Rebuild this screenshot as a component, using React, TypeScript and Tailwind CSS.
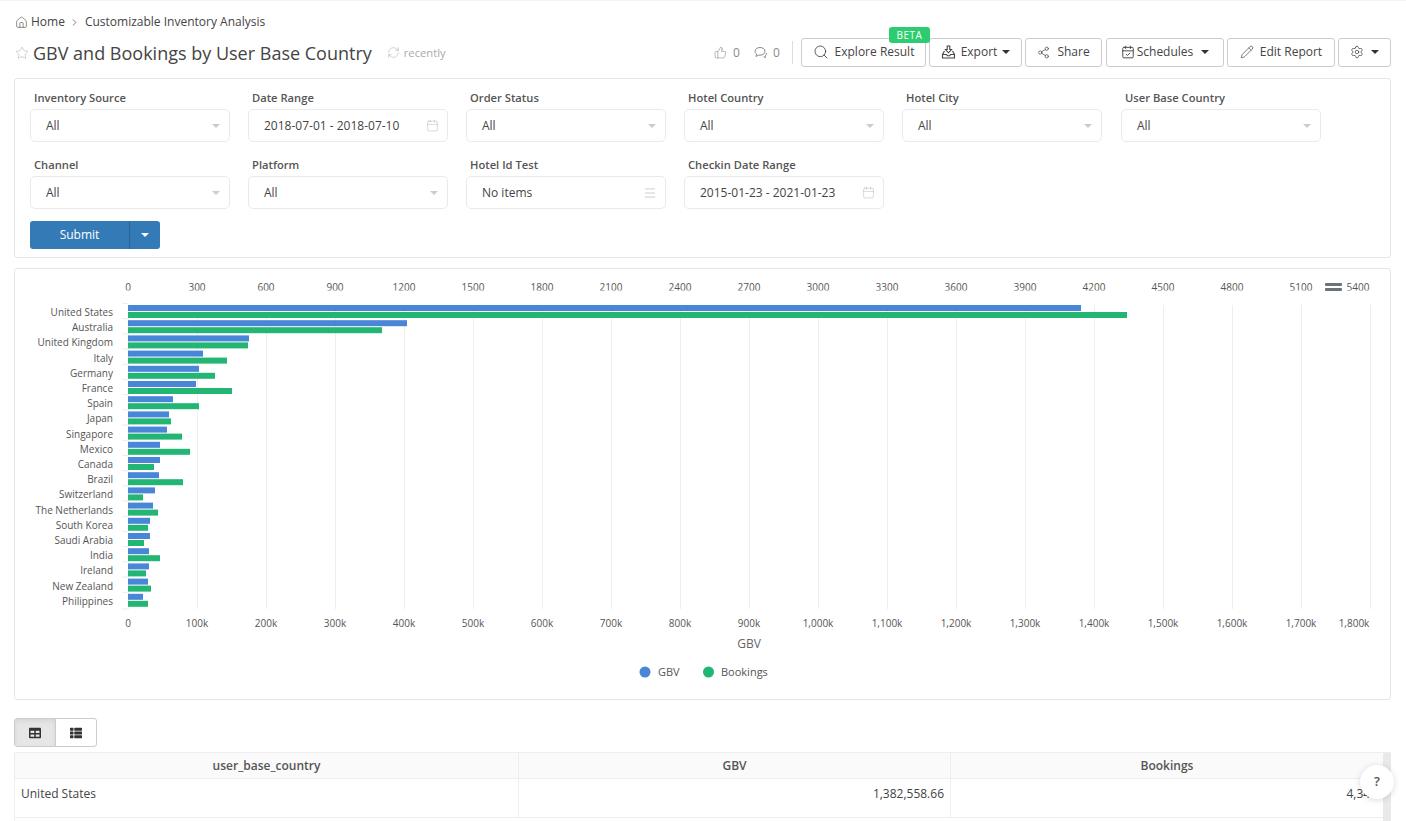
import { Calendar, CalendarCheck, ChevronRight, Home, Menu, Pencil, RefreshCw, Search, Settings, Share2, Star, ThumbsUp } from "lucide-react";
import { FaTable, FaThList } from "react-icons/fa";

const bars: [string, number, number][] = [
  ["United States", 1081, 1127],
  ["Australia", 407, 382],
  ["United Kingdom", 249, 248],
  ["Italy", 203, 227],
  ["Germany", 199, 215],
  ["France", 196, 232],
  ["Spain", 173, 199],
  ["Japan", 169, 171],
  ["Singapore", 167, 182],
  ["Mexico", 160, 190],
  ["Canada", 160, 154],
  ["Brazil", 159, 183],
  ["Switzerland", 155, 143],
  ["The Netherlands", 153, 158],
  ["South Korea", 150, 148],
  ["Saudi Arabia", 150, 144],
  ["India", 149, 160],
  ["Ireland", 149, 146],
  ["New Zealand", 148, 151],
  ["Philippines", 143, 148],
];

const topTicks = ["0", "300", "600", "900", "1200", "1500", "1800", "2100", "2400", "2700", "3000", "3300", "3600", "3900", "4200", "4500", "4800", "5100", "5400"];
const bottomTicks = ["0", "100k", "200k", "300k", "400k", "500k", "600k", "700k", "800k", "900k", "1,000k", "1,100k", "1,200k", "1,300k", "1,400k", "1,500k", "1,600k", "1,700k", "1,800k"];

const Caret = () => <span className="inline-block w-0 h-0 border-x-[4px] border-x-transparent border-t-[4px] border-t-[#333]" />;

const ActionButton = ({ className, children }: { className: string; children: React.ReactNode }) => (
  <button className={`h-[29px] pb-[1px] flex items-center justify-center border border-[#ccc] rounded-[3px] bg-white text-[12px] text-[#444] ${className}`}>
    {children}
  </button>
);

const Field = ({ label, value, icon, className }: { label: string; value: string; icon?: React.ReactNode; className?: string }) => (
  <div className={`w-[200px] ${className ?? ""}`}>
    <div className="pl-1 h-[20px] text-[11.2px] font-semibold leading-[20px] text-[#555]">{label}</div>
    <div className="mt-[1px] h-[33px] pl-[15px] pr-[8px] flex items-center justify-between border border-[#eaeaea] rounded-[5px] text-[12px] text-[#444]">
      <span>{value}</span>
      {icon ?? <span className="mr-[1px] w-0 h-0 border-x-[4px] border-x-transparent border-t-[4px] border-t-[#ccc]" />}
    </div>
  </div>
);

const Chart = () => (
  <svg width="1375" height="430" viewBox="15 269 1375 430" className="block" fontFamily="'Open Sans', sans-serif">
    <defs>
      <clipPath id="topClip">
        <rect x="15" y="270" width="1375" height="20.5" />
      </clipPath>
    </defs>
    {topTicks.map((_, i) => (
      <line key={i} x1={128.5 + i * 69} x2={128.5 + i * 69} y1="305" y2="609" stroke="#eeeeee" />
    ))}
    <g clipPath="url(#topClip)" fontSize="10" fill="#555" textAnchor="middle">
      {topTicks.map((t, i) => (
        <text key={t} x={128 + i * 69 - (i === 18 ? 12 : 0)} y="291">{t}</text>
      ))}
    </g>
    {bars.map(([name, blue, green], i) => {
      const y = 305 + i * 15.2;
      return (
        <g key={name}>
          <line x1="122" x2="128" y1={y - 1.5} y2={y - 1.5} stroke="#eeeeee" />
          <text x="113" y={y + 11} fontSize="10" fill="#555" textAnchor="end">{name}</text>
          <rect x="128" y={y} width={blue - 128} height="6" fill="#4a86d8" />
          <rect x="128" y={y + 7} width={green - 128} height="6" fill="#22b573" />
        </g>
      );
    })}
    <line x1="122" x2="128" y1="609" y2="609" stroke="#eeeeee" />
    <g fontSize="10" fill="#555" textAnchor="middle">
      {bottomTicks.map((t, i) => (
        <text key={t} x={128 + i * 69 - (i === 18 ? 16 : 0)} y="627">{t}</text>
      ))}
    </g>
    <text x="749" y="648" fontSize="12" fill="#666" textAnchor="middle">GBV</text>
    <circle cx="645" cy="672" r="5.5" fill="#4a86d8" />
    <text x="658" y="676" fontSize="11" fill="#555">GBV</text>
    <circle cx="708.5" cy="672" r="5.5" fill="#22b573" />
    <text x="721" y="676" fontSize="11" fill="#555">Bookings</text>
    <rect x="1325" y="283" width="17" height="3" rx="1" fill="#6b7378" />
    <rect x="1325" y="288" width="17" height="3" rx="1" fill="#6b7378" />
  </svg>
);

export default function App() {
  return (
    <div className="relative h-[821px] overflow-hidden bg-white pl-[14px] pr-[15px] font-['Open_Sans',sans-serif] text-[#444]">
      <div className="absolute inset-x-0 top-0 h-[1px] bg-[#f3f3f3]" />

      <div className="pt-[8px] h-[36px] flex items-center text-[12px] text-[#444]">
        <Home size={13} strokeWidth={1.2} className="ml-[1px] mr-[3px] text-[#555]" />
        <span>Home</span>
        <ChevronRight size={11} className="mx-[4px] text-[#777]" />
        <span className="ml-[1px]">Customizable Inventory Analysis</span>
      </div>

      <div className="relative mt-[2px] h-[29px] flex items-center justify-between">
        <div className="flex items-center">
          <Star size={14} strokeWidth={1.2} className="ml-[1px] text-[#bbb]" />
          <span className="ml-[4px] mt-[1px] text-[18px] leading-[29px] text-[#444]">GBV and Bookings by User Base Country</span>
          <RefreshCw size={13} strokeWidth={1.2} className="ml-[15px] text-[#bbb]" />
          <span className="ml-[4px] mt-[1px] text-[11.2px] text-[#aaa]">recently</span>
        </div>
        <div className="flex items-center">
          <ThumbsUp size={13} strokeWidth={1.1} className="text-[#888]" />
          <span className="ml-[6px] w-[11px] text-[12px] text-[#888]">0</span>
          <svg width="13" height="13" viewBox="0 0 13 13" fill="none" stroke="#888" strokeWidth="1" className="ml-[10px]">
            <path d="M6 1.5c-2.8 0-5 1.7-5 3.8 0 1.1.6 2.1 1.6 2.8L2 10.5l2.6-1.4c.4.1.9.1 1.4.1 2.8 0 5-1.7 5-3.9S8.800 1.500 6 1.500Z" />
            <path d="M12.500 7c0 1.300-.6 2.300-1.500 3l.5 1.500-2-.8" />
          </svg>
          <span className="ml-[6px] w-[12px] text-[12px] text-[#888]">0</span>
          <div className="ml-[7px] mr-[8px] h-[23px] w-[1px] bg-[#ddd]" />
          <div className="flex gap-[3px]">
            <ActionButton className="relative w-[125px] gap-[6px]">
              <Search size={16} strokeWidth={1.3} />
              Explore Result
              <span className="absolute right-[-5px] top-[-12px] h-[16px] w-[41px] rounded-[3px] bg-[#2ecc71] text-center text-[10px] leading-[17px] tracking-[0.5px] text-white">BETA</span>
            </ActionButton>
            <ActionButton className="w-[93px] gap-[5px]">
              <svg width="15" height="14" viewBox="0 0 15 14" fill="none" stroke="#444" strokeWidth="1.1">
                <path d="M6.200 1h2.600v3.500h1.700L7.500 7.800 4.500 4.500h1.700V1ZM3.500 6 1.500 9.500V13h12V9.500L11.500 6M1.500 9.500h4l.8 1.300h2.400l.8-1.300h4" />
              </svg>
              <span>Export</span>
              <Caret />
            </ActionButton>
            <ActionButton className="w-[77px] gap-[7px]">
              <Share2 size={13} strokeWidth={1.3} />
              Share
            </ActionButton>
            <ActionButton className="ml-[1px] w-[118px] gap-[2px]">
              <CalendarCheck size={14} strokeWidth={1.6} />
              Schedules
              <span className="ml-[6px] flex"><Caret /></span>
            </ActionButton>
            <ActionButton className="w-[108px] gap-[6px]">
              <Pencil size={14} strokeWidth={1.2} />
              Edit Report
            </ActionButton>
            <ActionButton className="w-[53px] gap-[7px]">
              <Settings size={14} strokeWidth={1.3} />
              <Caret />
            </ActionButton>
          </div>
        </div>
      </div>

      <div className="mt-[11px] h-[180px] border border-[#e6e6e6] rounded-[3px] pl-[15px] pt-[9px]">
        <div className="flex gap-x-[18px]">
          <Field label="Inventory Source" value="All" />
          <Field label="Date Range" value="2018-07-01 - 2018-07-10" icon={<Calendar size={13} strokeWidth={1} className="text-[#bbb]" />} />
          <Field label="Order Status" value="All" />
          <Field label="Hotel Country" value="All" />
          <Field label="Hotel City" value="All" />
          <Field label="User Base Country" value="All" className="ml-[1px]" />
        </div>
        <div className="mt-[13px] flex gap-x-[18px]">
          <Field label="Channel" value="All" />
          <Field label="Platform" value="All" />
          <Field label="Hotel Id Test" value="No items" icon={<Menu size={14} strokeWidth={1} className="text-[#aaa]" />} />
          <Field label="Checkin Date Range" value="2015-01-23 - 2021-01-23" icon={<Calendar size={13} strokeWidth={1} className="text-[#bbb]" />} />
        </div>
        <div className="mt-[12px] flex h-[28px] w-[130px] overflow-hidden rounded-[3px] bg-[#337ab7] text-[12px] text-white">
          <span className="w-[100px] border-r border-[#2a6496] text-center leading-[28px]">Submit</span>
          <span className="flex flex-1 items-center justify-center">
            <span className="h-0 w-0 border-x-[4px] border-x-transparent border-t-[4px] border-t-white" />
          </span>
        </div>
      </div>

      <div className="mt-[10px] h-[432px] border border-[#e6e6e6] rounded-[3px]">
        <Chart />
      </div>

      <div className="mt-[18px] flex h-[29px] w-[83px] overflow-hidden rounded-[3px] border border-[#ccc]">
        <span className="flex w-[41px] items-center justify-center border-r border-[#ccc] bg-[#e6e6e6] text-[#333] shadow-[inset_0_2px_4px_rgba(0,0,0,0.08)]"><FaTable size={12} /></span>
        <span className="flex flex-1 items-center justify-center text-[#333]"><FaThList size={12} /></span>
      </div>

      <div className="relative mt-[5px] flex h-[69px] border-t border-[#eee] text-[12px]">
        <div className="w-[1369px] border-l border-[#eee]">
          <div className="grid h-[26px] grid-cols-[504px_432px_1fr] border-b border-[#eee] bg-[#fafafa] font-semibold leading-[25px] text-[#555]">
            <div className="border-r border-[#eee] text-center">user_base_country</div>
            <div className="border-r border-[#eee] text-center">GBV</div>
            <div className="text-center">Bookings</div>
          </div>
          <div className="grid h-[39px] grid-cols-[504px_432px_1fr] border-b border-[#eee] leading-[30px] text-[#444]">
            <div className="border-r border-[#eee] pl-[6px]">United States</div>
            <div className="border-r border-[#eee] pr-[6px] text-right">1,382,558.66</div>
            <div className="pr-[6px] text-right">4,345</div>
          </div>
        </div>
        <div className="w-[8px] bg-[#e9e9e9]" />
        <div className="absolute right-[-3px] top-[12px] flex h-[34px] w-[34px] items-center justify-center rounded-full bg-white text-[13px] font-semibold text-[#555] shadow-[0_1px_6px_rgba(0,0,0,0.15)]">?</div>
      </div>
    </div>
  );
}
